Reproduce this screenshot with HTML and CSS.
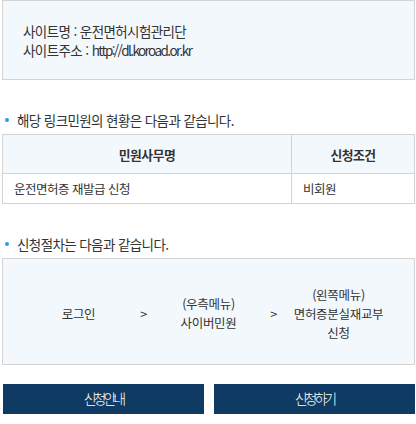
FILE: index.html
```html
<!DOCTYPE html>
<html lang="ko">
<head>
<meta charset="utf-8">
<link rel="stylesheet" href="styles.css">
</head>
<body>
<div class="page">
  <div class="info-box">
    <p>사이트명 : 운전면허시험관리단</p>
    <p>사이트주소 : <span class="url">http://dl.koroad.or.kr</span></p>
  </div>

  <h3 class="bullet">해당 링크민원의 현황은 다음과 같습니다.</h3>
  <table class="status">
    <thead>
      <tr><th class="c-name">민원사무명</th><th class="c-cond">신청조건</th></tr>
    </thead>
    <tbody>
      <tr><td>운전면허증 재발급 신청</td><td>비회원</td></tr>
    </tbody>
  </table>

  <h3 class="bullet">신청절차는 다음과 같습니다.</h3>
  <div class="steps">
    <div class="step">로그인</div>
    <div class="arrow">&gt;</div>
    <div class="step">(우측메뉴)<br>사이버민원</div>
    <div class="arrow">&gt;</div>
    <div class="step">(왼쪽메뉴)<br>면허증분실재교부<br>신청</div>
  </div>

  <div class="buttons">
    <a class="btn">신청안내</a>
    <a class="btn">신청하기</a>
  </div>
</div>
</body>
</html>
```

FILE: styles.css
```css
* { box-sizing: border-box; }
html, body { margin: 0; padding: 0; background: #fff; }
body {
  font-family: "Noto Sans CJK KR", "Noto Sans", sans-serif;
  font-size: 12px;
  color: #333;
  letter-spacing: -0.5px;
}
.page {
  width: 416px;
  padding: 0 1px 0 2px;
}
.info-box {
  border: 1px solid #d4d4d4;
  background: #f3f8fd;
  padding: 21px 20px 19px;
  font-size: 13.5px;
  letter-spacing: -0.6px;
}
.info-box p {
  margin: 0;
  line-height: 19px;
}
.url {
  letter-spacing: -1.6px;
}
.bullet {
  position: relative;
  margin: 31px 0 5px;
  padding-left: 15px;
  font-size: 13.5px;
  font-weight: normal;
  line-height: 18px;
  color: #333;
  letter-spacing: -0.6px;
}
.bullet::before {
  content: "";
  position: absolute;
  left: 3px;
  top: 7px;
  width: 4px;
  height: 4px;
  border-radius: 50%;
  background: #1f9ef2;
}
.status {
  width: 100%;
  border-collapse: collapse;
}
.status th, .status td {
  border: 1px solid #d4d4d4;
}
.status th {
  height: 39px;
  background: #f3f8fd;
  font-weight: bold;
  font-size: 12.8px;
  text-align: center;
  color: #333;
}
.status td {
  height: 30px;
  padding: 0 11px;
  font-size: 12.5px;
  text-align: left;
}
.c-name { width: 289px; }
.steps {
  border: 1px solid #d4d4d4;
  background: #f3f8fd;
  height: 107px;
  display: flex;
  justify-content: center;
  align-items: center;
  padding-top: 3px;
  font-size: 12.5px;
  letter-spacing: -0.3px;
}
.step {
  width: 100px;
  text-align: center;
  line-height: 19px;
}
.arrow {
  width: 30px;
  text-align: center;
}
.buttons {
  margin: 19px 0 0 1px;
  display: grid;
  grid-template-columns: 1fr 1fr;
  gap: 10px;
}
.btn {
  display: block;
  height: 30px;
  line-height: 29px;
  background: #0f3a63;
  color: #fff;
  text-align: center;
  font-size: 14px;
  font-weight: 300;
  letter-spacing: -3px;
}
```
